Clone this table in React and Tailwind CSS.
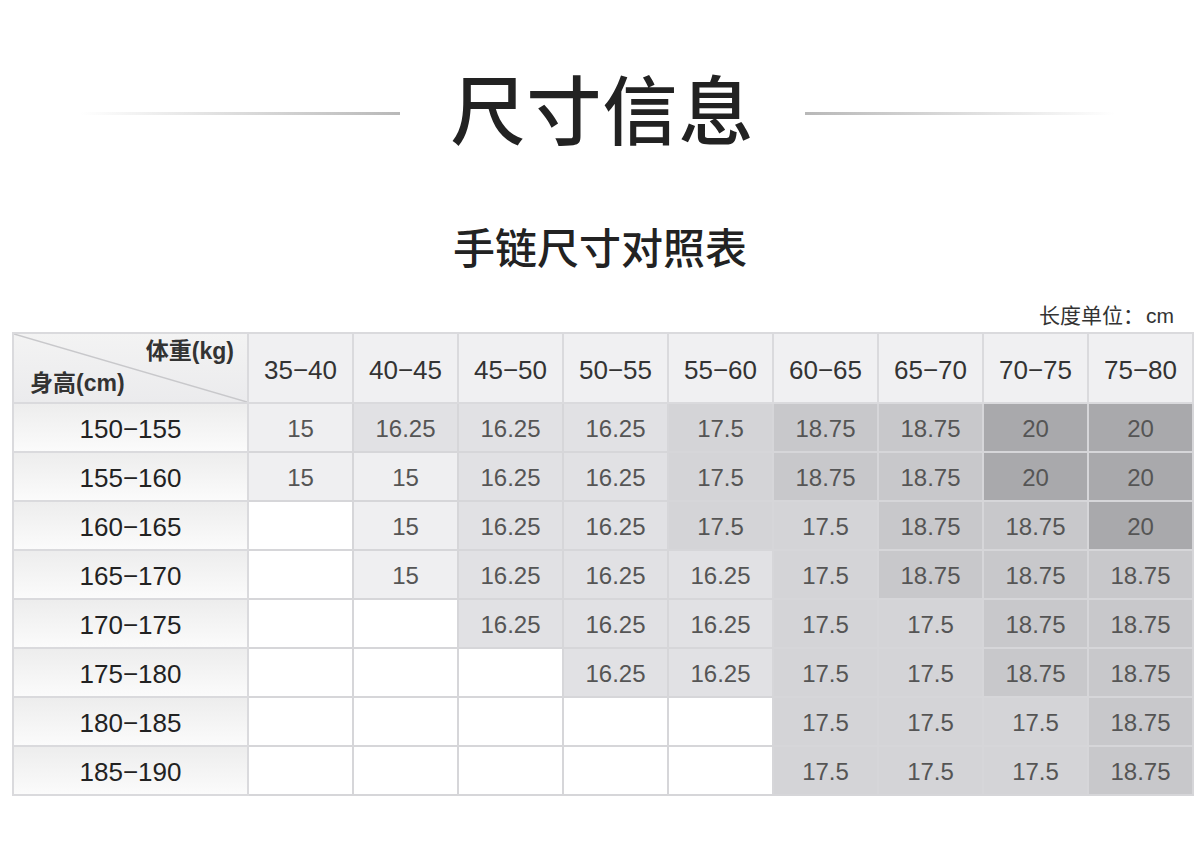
import React from "react";

const cols = ["35−40", "40−45", "45−50", "50−55", "55−60", "60−65", "65−70", "70−75", "75−80"];
const rows = [
  ["150−155", ["15", "16.25", "16.25", "16.25", "17.5", "18.75", "18.75", "20", "20"]],
  ["155−160", ["15", "15", "16.25", "16.25", "17.5", "18.75", "18.75", "20", "20"]],
  ["160−165", ["", "15", "16.25", "16.25", "17.5", "17.5", "18.75", "18.75", "20"]],
  ["165−170", ["", "15", "16.25", "16.25", "16.25", "17.5", "18.75", "18.75", "18.75"]],
  ["170−175", ["", "", "16.25", "16.25", "16.25", "17.5", "17.5", "18.75", "18.75"]],
  ["175−180", ["", "", "", "16.25", "16.25", "17.5", "17.5", "18.75", "18.75"]],
  ["180−185", ["", "", "", "", "", "17.5", "17.5", "17.5", "18.75"]],
  ["185−190", ["", "", "", "", "", "17.5", "17.5", "17.5", "18.75"]],
];

const bgFor = {
  "": "bg-white",
  "15": "bg-[#efeff1]",
  "16.25": "bg-[#e1e1e4]",
  "17.5": "bg-[#d4d4d7]",
  "18.75": "bg-[#c8c8cb]",
  "20": "bg-[#a9a9ac]",
};

const font = { fontFamily: '"Liberation Sans", Arial, "Noto Sans CJK SC", sans-serif' };

export default function App() {
  return (
    <div className="w-[1200px] h-[866px] bg-white flex flex-col items-center" style={font}>
      <div className="mt-[73px] flex items-center w-full">
        <div className="ml-[80px] w-[320px] h-[3px] bg-gradient-to-r from-transparent to-[#b8b8b8]"></div>
        <div className="flex-1 text-center text-[75px] leading-[80px] font-medium text-[#222] tracking-[1px]">尺寸信息</div>
        <div className="mr-[85px] w-[310px] h-[3px] bg-gradient-to-l from-transparent to-[#b8b8b8]"></div>
      </div>
      <div className="mt-[75px] text-[42px] leading-[44px] font-medium text-[#222]">手链尺寸对照表</div>
      <div className="w-full flex justify-end pr-[26px] mt-[32px] text-[21px] leading-[24px] text-[#333]">
        长度单位：<span className="ml-[2px]">cm</span>
      </div>
      <div className="mt-[4px] self-start ml-[12px] grid grid-cols-[235px_repeat(9,105px)] grid-rows-[70px_repeat(8,49px)] border-t-2 border-l-2 border-[#dadadd]">
        <div className="relative bg-gradient-to-b from-[#f3f3f3] to-[#ebebed] border-r-2 border-b-2 border-[#dadadd]">
          <svg className="absolute inset-0" width="233" height="68" viewBox="0 0 233 68">
            <line x1="0" y1="0" x2="233" y2="68" stroke="#c8c8cb" strokeWidth="1.5" />
          </svg>
          <div className="absolute right-[13px] top-[0px] text-[23px] font-semibold text-[#333]">体重(kg)</div>
          <div className="absolute left-[16px] top-[32px] text-[23px] font-semibold text-[#333]">身高(cm)</div>
        </div>
        {cols.map((c) => (
          <div key={c} className="flex items-center justify-center pt-[4px] bg-[#f0f0f2] border-r-2 border-b-2 border-[#dadadd] text-[26px] text-[#333]">
            {c}
          </div>
        ))}
        {rows.map(([h, vals]) => (
          <React.Fragment key={h}>
            <div className="flex items-center justify-center pt-[3px] bg-gradient-to-b from-[#ededed] to-[#fbfbfb] border-r-2 border-b-2 border-[#dadadd] text-[26px] text-[#222]">
              {h}
            </div>
            {vals.map((v, i) => (
              <div
                key={i}
                className={`flex items-center justify-center pt-[3px] ${bgFor[v]} border-r-2 border-b-2 border-[#d6d6d9] text-[24px] text-[#555]`}
              >
                {v}
              </div>
            ))}
          </React.Fragment>
        ))}
      </div>
    </div>
  );
}
